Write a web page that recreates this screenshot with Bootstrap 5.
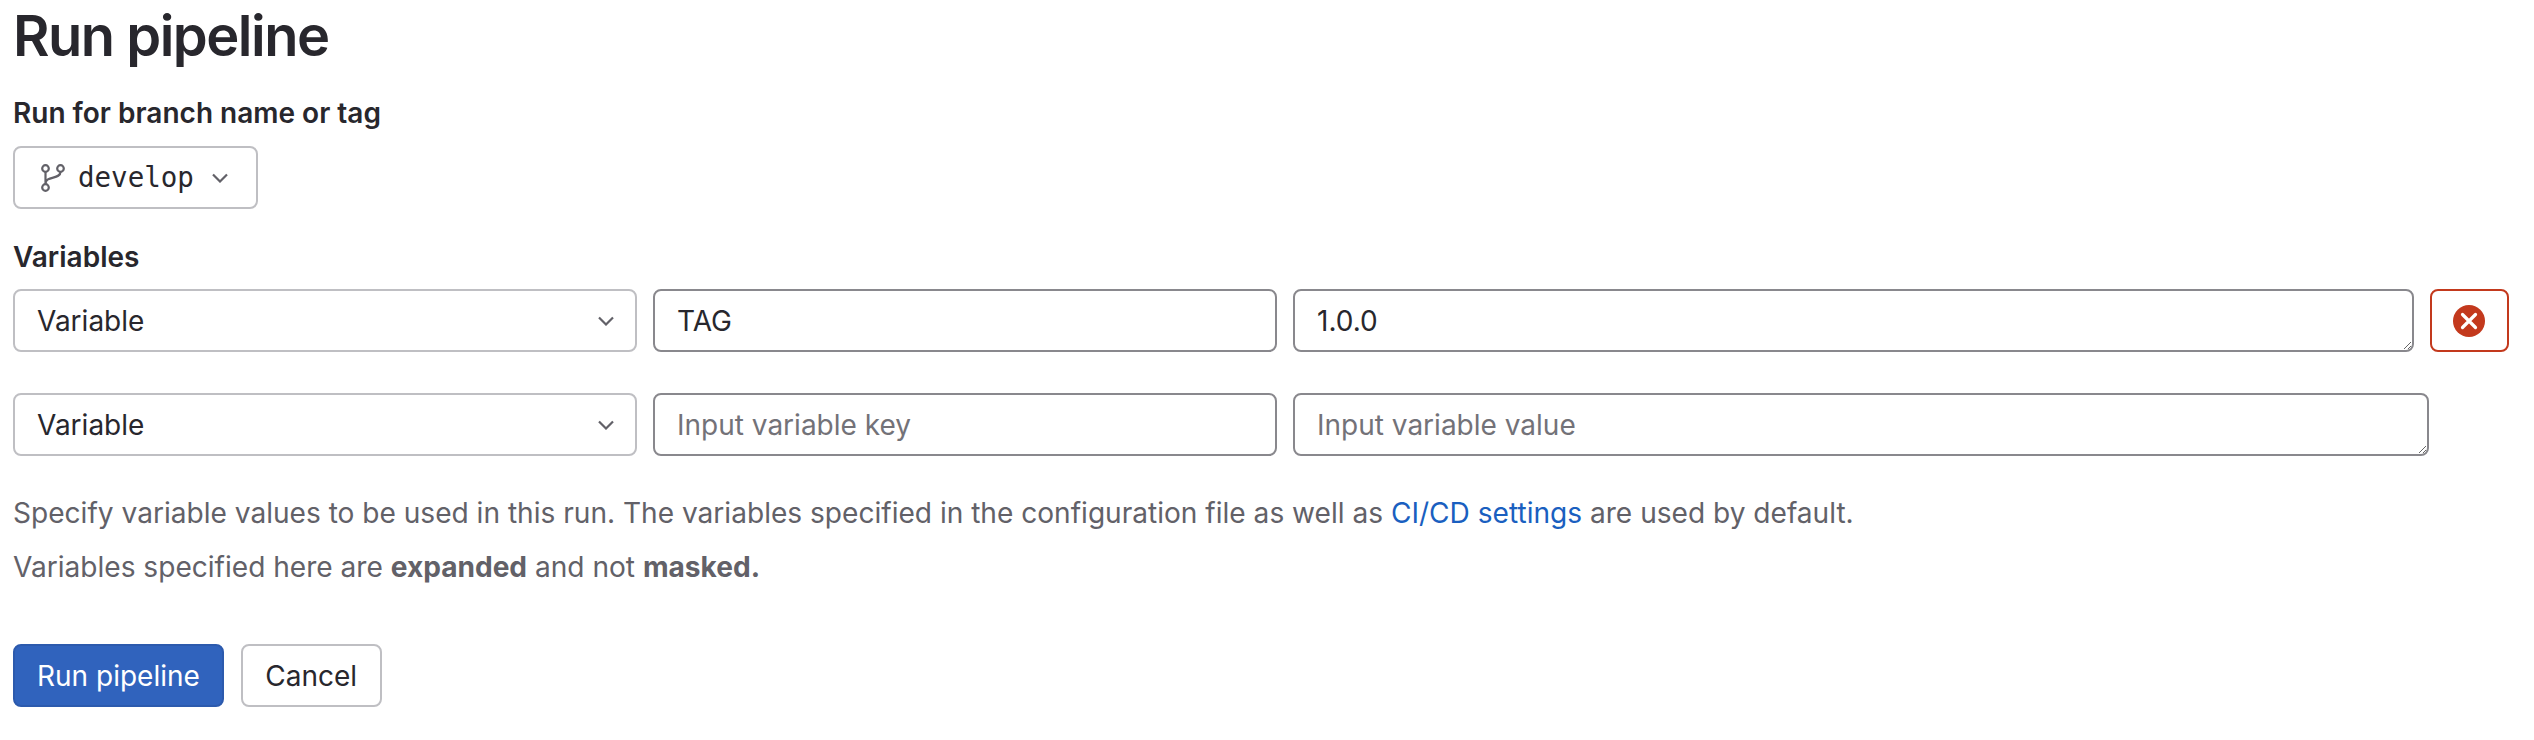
<!DOCTYPE html>
<html lang="en">
<head>
<meta charset="utf-8">
<title>Run pipeline</title>
<link href="https://cdn.jsdelivr.net/npm/bootstrap@5.3.0/dist/css/bootstrap.min.css" rel="stylesheet">
<style>
:root{--ink:#28272d;--mid:#626168;--line:#bfbfc3;--line-strong:#89888d;--blue:#3063bd;--red:#c3391d;}
body{font-family:Inter,"Liberation Sans",sans-serif;color:var(--ink);background:#fff;font-size:28px;line-height:1.2;}
.page{padding:0 25.5px 0 13px;}
.page-title{font-size:56px;font-weight:600;letter-spacing:-1.5px;line-height:72px;margin:0 0 23px;color:var(--ink);}
.field-label{display:block;font-weight:600;font-size:28px;line-height:36px;margin:0 0 15px;color:var(--ink);}
.field-label.tight{margin-bottom:14px;}
.branch-btn,.plain-btn,.var-select,.var-input,.var-value,.remove-btn,.run-btn{height:63px;border-radius:8px;font-size:28px;}
.branch-btn{display:inline-flex;align-items:center;gap:13px;padding:0 28px 0 26px;background:#fff;border:2px solid var(--line);color:var(--ink);margin-bottom:30px;}
.branch-btn span{font-family:"DejaVu Sans Mono",monospace;font-size:27.5px;margin-right:5px;}
.var-row{display:flex;gap:16px;margin-bottom:41px;}
.var-row.last{padding-right:80px;margin-bottom:39px;}
.var-select{flex:0 0 624px;width:624px;border:2px solid var(--line);color:var(--ink);padding:0 22px;background-image:url("data:image/svg+xml,%3Csvg xmlns='http://www.w3.org/2000/svg' viewBox='0 0 16 10'%3E%3Cpath d='M1 1.5l7 7 7-7' fill='none' stroke='%23626168' stroke-width='2.2'/%3E%3C/svg%3E");background-size:16px 10px;background-position:right 21px center;}
.var-input{flex:0 0 624px;width:624px;border:2px solid var(--line-strong);color:var(--ink);padding:0 22px;}
.var-value{flex:1 1 0;min-width:0;border:2px solid var(--line-strong);color:var(--ink);padding:13px 22px 0;line-height:34px;resize:vertical;}
.var-input::placeholder,.var-value::placeholder{color:#737278;opacity:1;}
.remove-btn{flex:0 0 79px;display:flex;align-items:center;justify-content:center;background:#fff;border:2px solid var(--red);padding:0;}
.help-line{font-size:28.08px;line-height:36px;color:var(--mid);margin:0 0 18px;}
.help-line a{color:#1a5fc0;text-decoration:none;}
.help-line strong{font-weight:700;}
.actions{display:flex;gap:17px;margin-top:59px;}
.run-btn{background:var(--blue);border:2px solid #2c5aad;color:#fff;padding:0 22px;}
.plain-btn{background:#fff;border:2px solid var(--line);color:var(--ink);padding:0 22.5px;}
</style>
</head>
<body>
<main class="page">
  <h1 class="page-title">Run pipeline</h1>
  <form>
    <label class="field-label">Run for branch name or tag</label>
    <button type="button" class="btn branch-btn">
      <svg width="24" height="28" viewBox="0 0 24 28" fill="none" stroke="#626168" stroke-width="2.2"><circle cx="4.5" cy="4.5" r="3.3"/><circle cx="19.5" cy="4.5" r="3.3"/><circle cx="4.5" cy="23.5" r="3.3"/><path d="M4.5 7.8v12.4M19.5 7.8c0 8-15 3.5-15 12"/></svg>
      <span>develop</span>
      <svg width="16" height="10" viewBox="0 0 16 10" fill="none" stroke="#626168" stroke-width="2.2"><path d="M1 1.5l7 7 7-7"/></svg>
    </button>
    <label class="field-label tight">Variables</label>
    <div class="var-row">
      <select class="form-select var-select"><option>Variable</option></select>
      <input class="form-control var-input" value="TAG">
      <textarea class="form-control var-value" rows="1">1.0.0</textarea>
      <button type="button" class="btn remove-btn" aria-label="Remove">
        <svg width="32" height="32" viewBox="0 0 32 32"><circle cx="16" cy="16" r="16" fill="#c3391d"/><path d="M9.5 9.5l13 13M22.5 9.5l-13 13" stroke="#fff" stroke-width="3.2" stroke-linecap="round"/></svg>
      </button>
    </div>
    <div class="var-row last">
      <select class="form-select var-select"><option>Variable</option></select>
      <input class="form-control var-input" placeholder="Input variable key">
      <textarea class="form-control var-value" rows="1" placeholder="Input variable value"></textarea>
    </div>
    <p class="help-line">Specify variable values to be used in this run. The variables specified in the configuration file as well as <a href="#">CI/CD settings</a> are used by default.</p>
    <p class="help-line">Variables specified here are <strong>expanded</strong> and not <strong>masked.</strong></p>
    <div class="actions">
      <button type="button" class="btn run-btn">Run pipeline</button>
      <button type="button" class="btn plain-btn">Cancel</button>
    </div>
  </form>
</main>
<script src="https://cdn.jsdelivr.net/npm/bootstrap@5.3.0/dist/js/bootstrap.bundle.min.js"></script>
</body>
</html>
